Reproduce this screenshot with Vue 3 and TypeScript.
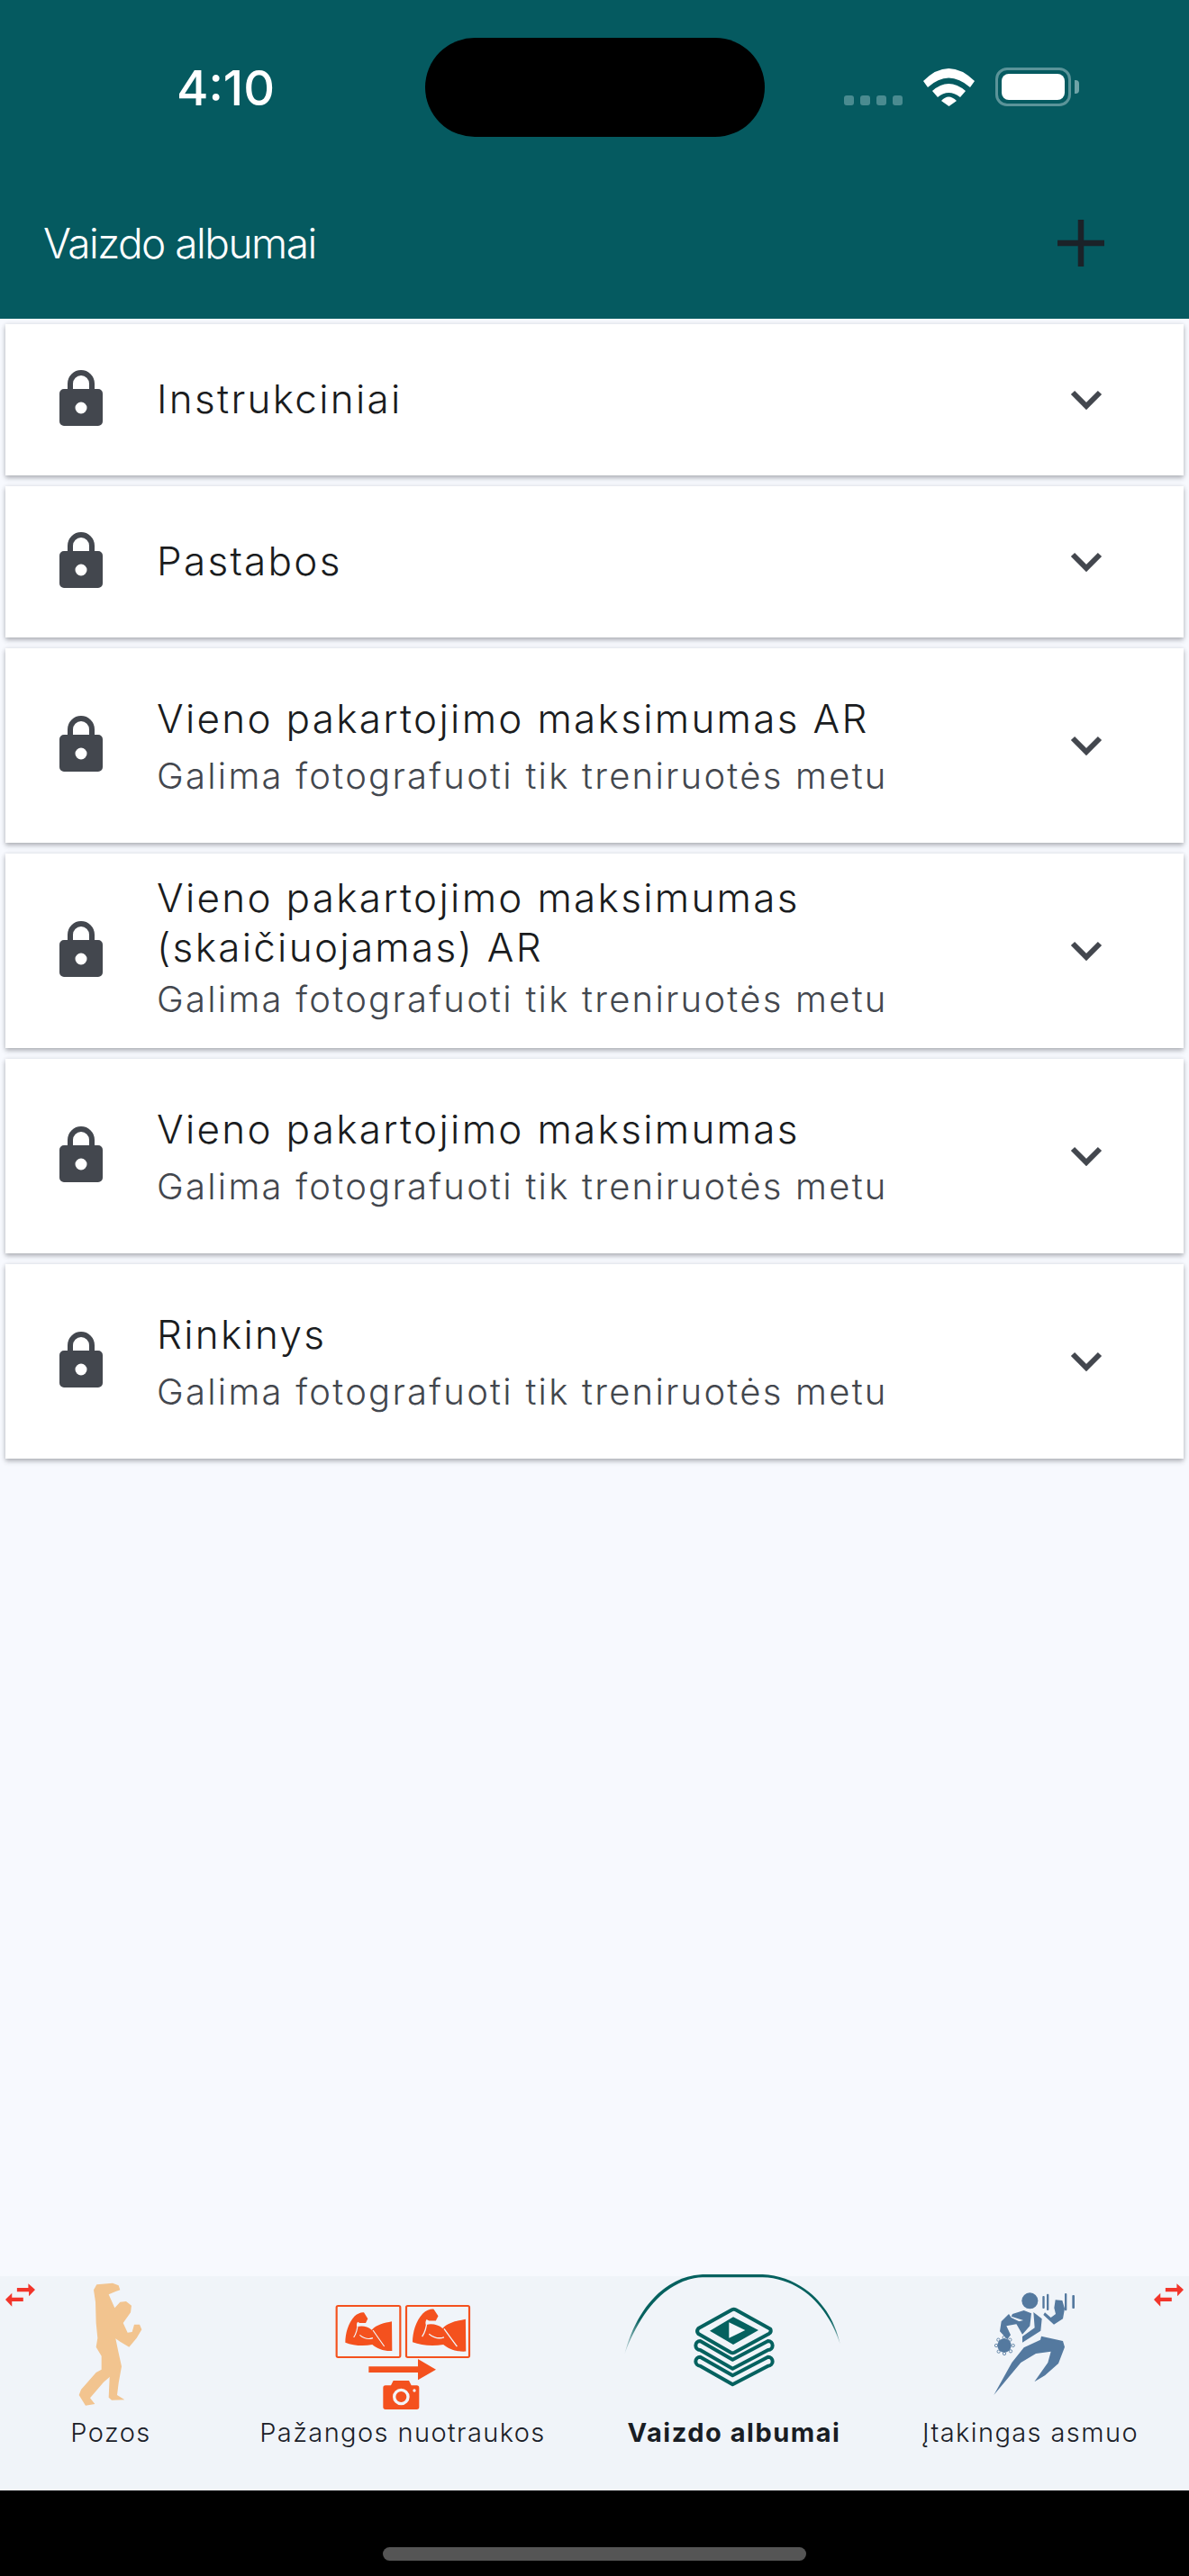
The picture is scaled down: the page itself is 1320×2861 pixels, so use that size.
<script setup lang="ts">
interface Album { title: string; sub?: string; wrap?: boolean }
const albums: Album[] = [
  { title: 'Instrukciniai' },
  { title: 'Pastabos' },
  { title: 'Vieno pakartojimo maksimumas AR', sub: 'Galima fotografuoti tik treniruotės metu' },
  { title: 'Vieno pakartojimo maksimumas (skaičiuojamas) AR', sub: 'Galima fotografuoti tik treniruotės metu', wrap: true },
  { title: 'Vieno pakartojimo maksimumas', sub: 'Galima fotografuoti tik treniruotės metu' },
  { title: 'Rinkinys', sub: 'Galima fotografuoti tik treniruotės metu' },
]
const bicep = 'M310 305 C310 275 320 240 340 218 C350 208 365 203 372 205 L385 226 L378 240 L358 240 L351 236 C347 243 347 250 350 252 C368 248 385 252 398 263 C415 245 440 240 465 235 L466 333 C440 335 415 325 400 312 C370 318 335 315 310 305 Z'
const flexLines = 'M352 240 Q350 270 338 288 M358 280 Q380 298 402 290 M402 264 Q420 290 440 318'
</script>

<template>
  <div class="screen">
    <header class="top">
      <div class="status">
        <span class="time">4:10</span>
        <span class="island"></span>
        <div class="indicators">
          <span class="dots"><i></i><i></i><i></i><i></i></span>
          <svg class="wifi" viewBox="0 0 57 42" width="57" height="42">
            <path d="M0 14 Q28 -14 57 14 L52 21 Q28 0 5 21 Z" fill="#fff" />
            <path d="M10 25 Q28 9 47 25 L41 32 Q28 22 16 32 Z" fill="#fff" />
            <path d="M20 36 Q28 27 37 36 L28.500 42 Z" fill="#fff" />
          </svg>
          <span class="battery"><span class="battery-fill"></span></span>
          <span class="nib"></span>
        </div>
      </div>
      <div class="bar">
        <h1 class="bar-title">Vaizdo albumai</h1>
        <svg class="plus" viewBox="0 0 52 52" width="52" height="52">
          <path d="M0 26 H52 M26 0 V52" stroke="#1b2228" stroke-width="6.500" fill="none" />
        </svg>
      </div>
    </header>

    <main class="list">
      <article v-for="a in albums" :key="a.title" class="card" :class="{ tall: a.sub }">
        <svg class="lock" viewBox="0 0 48 62" width="48" height="62">
          <path d="M12 24 V15 A12 12 0 0 1 36 15 V24" fill="none" stroke="#43474e" stroke-width="6" />
          <path fill-rule="evenodd" fill="#43474e" d="M5 21 H43 A5 5 0 0 1 48 26 V57 A5 5 0 0 1 43 62 H5 A5 5 0 0 1 0 57 V26 A5 5 0 0 1 5 21 Z M24 35.500 A6.500 6.500 0 1 0 24 48.500 A6.500 6.500 0 1 0 24 35.500 Z" />
        </svg>
        <div class="copy" :class="{ single: a.sub && !a.wrap, plain: !a.sub, wrapped: a.wrap }">
          <div class="title">{{ a.title }}</div>
          <div v-if="a.sub" class="sub">{{ a.sub }}</div>
        </div>
        <svg class="chev" viewBox="0 0 36 22" width="36" height="22">
          <path d="M3 3 L18 18 L33 3" fill="none" stroke="#43474e" stroke-width="6" />
        </svg>
      </article>
    </main>

    <nav class="nav">
      <svg class="swap swap-l" viewBox="18 108 100 77" width="33" height="26">
        <path d="M57 122 H95 V108 L118 128 L97 150 V135 H57 Z M78 155 V168 H40 V185 L18 162 L40 140 V155 Z" fill="#f2352b" />
      </svg>
      <svg class="swap swap-r" viewBox="18 108 100 77" width="33" height="26">
        <path d="M57 122 H95 V108 L118 128 L97 150 V135 H57 Z M78 155 V168 H40 V185 L18 162 L40 140 V155 Z" fill="#f2352b" />
      </svg>

      <div class="item">
        <svg class="icon" viewBox="0 84 738 480">
          <path fill="#f2c48f" d="M400 130 L395 115 L375 107 L322 112 L312 130 L318 170 L320 240 L325 290 L320 320 L338 350 L338 395 L320 405 L270 462 L263 480 L285 515 L316 510 L300 490 L345 437 L365 420 L362 488 L372 497 L415 496 L390 480 L395 440 L405 385 L395 340 L385 292 L400 302 L430 320 L455 290 L472 262 L465 245 L447 245 L440 270 L425 272 L410 240 L435 205 L438 182 L420 168 L400 170 L382 190 L362 145 L385 135 Z" />
        </svg>
        <span class="label">Pozos</span>
      </div>

      <div class="item">
        <svg class="icon" viewBox="-102 84 1206 480">
          <rect x="281" y="183" width="212" height="171" rx="5" fill="none" stroke="#f4511e" stroke-width="6.500" />
          <rect x="513" y="183" width="210" height="171" rx="5" fill="none" stroke="#f4511e" stroke-width="6.500" />
          <path :d="bicep" fill="#f4511e" />
          <path :d="flexLines" fill="none" stroke="#f2f5f9" stroke-width="3.500" />
          <g transform="translate(224 -11) translate(310 205) scale(1.14 1.1) translate(-310 -205)">
            <path :d="bicep" fill="#f4511e" />
            <path :d="flexLines" fill="none" stroke="#f2f5f9" stroke-width="3.500" />
          </g>
          <path d="M388 385 H552 V360 L612 395 L552 430 V405 H388 Z" fill="#f4511e" />
          <path fill-rule="evenodd" fill="#f4511e" d="M444 448 H462 L470 432 H522 L530 448 H548 A8 8 0 0 1 556 456 V520 A8 8 0 0 1 548 528 H444 A8 8 0 0 1 436 520 V456 A8 8 0 0 1 444 448 Z" />
          <circle cx="496" cy="486" r="23" fill="none" stroke="#f2f5f9" stroke-width="10" />
          <circle cx="540" cy="465" r="5" fill="#f2f5f9" />
        </svg>
        <span class="label">Pažangos nuotraukos</span>
      </div>

      <div class="item">
        <svg class="icon arc-host" viewBox="-36 84 1002 480">
          <defs>
            <linearGradient id="arcFade" x1="0" y1="0" x2="0" y2="1">
              <stop offset="0" stop-color="#05615f" />
              <stop offset="0.55" stop-color="#05615f" />
              <stop offset="1" stop-color="#05615f" stop-opacity="0.1" />
            </linearGradient>
          </defs>
          <path fill="url(#arcFade)" d="M100 345 C135 205 225 85 360 78 L560 78 C690 85 790 180 818 310 C780 190 690 92 560 88 L360 88 C240 92 150 205 100 345 Z" />
          <g fill="none" stroke="#05615f" stroke-width="12" stroke-linejoin="round" stroke-linecap="round">
            <path d="M470 196 L586 260 Q590 270 582 275 L466 338 Q460 341 454 338 L346 276 Q338 268 346 258 L458 196 Q464 193 470 196 Z" />
            <path d="M352 300 L460 362 L578 300 A15 15 0 0 1 578 330 L460 392 L352 330 A15 15 0 0 1 352 300 Z" />
            <path d="M352 353 L460 415 L578 353 A15 15 0 0 1 578 383 L460 445 L352 383 A15 15 0 0 1 352 353 Z" />
          </g>
          <path d="M462 220 L546 264 L462 312 L384 266 Z" fill="#05615f" />
          <path d="M448 238 L502 264 L448 290 Z" fill="#f3f6fa" />
        </svg>
        <span class="label strong">Vaizdo albumai</span>
      </div>

      <div class="item">
        <svg class="icon" viewBox="6 84 972 480">
          <g fill="#54799f">
            <circle cx="490" cy="166" r="27" />
            <rect x="532" y="150" width="7" height="42" rx="3" />
            <rect x="546" y="143" width="7" height="55" rx="3" />
            <rect x="606" y="141" width="7" height="58" rx="3" />
            <rect x="631" y="147" width="8" height="45" rx="3" />
            <path d="M535 213 L570 245 L600 226 L606 192 L598 165 L575 163 L571 190 L576 210 L560 222 L540 205 Z" />
            <path d="M420 210 L395 235 L390 268 L415 295 L426 280 L412 250 L465 240 L428 222 Z" />
            <path d="M432 210 L470 198 L495 208 L490 250 L465 278 L442 238 L468 231 L428 218 Z" />
            <path d="M502 204 L530 226 L526 266 L465 305 L465 285 L506 256 Z" />
            <path d="M528 284 L600 300 L606 320 L585 375 L540 415 L505 436 L550 372 L560 335 L510 342 L460 372 L370 480 L430 372 L470 322 L525 296 Z" />
            <circle cx="405" cy="315" r="23" />
          </g>
          <g fill="none" stroke="#54799f" stroke-width="2.500">
            <circle cx="378" cy="315" r="5" /><circle cx="385" cy="296" r="5" /><circle cx="404" cy="288" r="5" />
            <circle cx="424" cy="296" r="5" /><circle cx="434" cy="315" r="5" /><circle cx="426" cy="334" r="5" />
            <circle cx="405" cy="342" r="5" /><circle cx="386" cy="335" r="5" />
          </g>
        </svg>
        <span class="label">Įtakingas asmuo</span>
      </div>
    </nav>

    <footer class="home"><span class="home-bar"></span></footer>
  </div>
</template>

<style scoped>
.screen {
  width: 1320px;
  height: 2861px;
  display: flex;
  flex-direction: column;
  background: #f7f9fe;
  font-family: Inter, "Noto Sans", sans-serif;
  overflow: hidden;
}
.top { height: 354px; background: #055a60; display: flex; flex-direction: column; }
.status { height: 152px; position: relative; flex: none; }
.time {
  position: absolute; left: 196px; top: 70px;
  font-size: 54px; line-height: 56px; font-weight: 500; color: #fff; letter-spacing: 0;
}
.island { position: absolute; left: 472px; top: 42px; width: 377px; height: 110px; border-radius: 55px; background: #000; }
.indicators { position: absolute; left: 937px; top: 75px; height: 43px; display: flex; align-items: flex-end; }
.dots { display: flex; gap: 7px; margin-bottom: 1px; }
.dots i { width: 11px; height: 11px; border-radius: 3px; background: #4a8b90; }
.wifi { margin-left: 23px; }
.battery {
  margin-left: 23px; width: 84px; height: 43px; box-sizing: border-box; border: 3px solid #5b9499;
  border-radius: 13px; padding: 4px; display: flex;
}
.battery-fill { flex: 1; background: #fff; border-radius: 8px; }
.nib { width: 5px; height: 15px; margin: 0 0 14px 4px; background: #6fa3a7; border-radius: 0 4px 4px 0; }
.bar { flex: 1; display: flex; align-items: center; justify-content: space-between; padding: 34px 94px 0 48px; }
.bar-title { margin: 0; font-size: 46px; line-height: 56px; font-weight: 300; color: #fff; letter-spacing: -1.5px; }

.list { flex: 1; padding: 6px 6px 0; display: flex; flex-direction: column; gap: 12px; }
.card {
  min-height: 168px; background: #fff; display: flex; align-items: center; padding: 0 90px 0 60px;
  box-sizing: border-box; box-shadow: 0 3px 5px rgba(35, 40, 48, 0.3), 0 0 5px rgba(35, 40, 48, 0.1);
}
.card.tall { min-height: 216px; }
.lock { flex: none; margin-bottom: 4px; }
.copy { flex: 1; margin-left: 60px; min-width: 0; padding-right: 90px; }
.copy.plain { padding-bottom: 3px; }
.copy.single { padding-top: 4px; }
.copy.single .sub { margin-top: 9px; }
.copy.wrapped { padding-bottom: 4px; }
.copy.wrapped .title { line-height: 55px; }
.copy.wrapped .sub { margin-top: 2px; }
.title { font-size: 44px; line-height: 54px; font-weight: 350; color: #1a1c1e; letter-spacing: 2.3px; }
.sub { font-size: 40px; line-height: 56px; font-weight: 350; color: #43474e; letter-spacing: 2.25px; }
.chev { flex: none; }

.nav {
  height: 238px; background: #f0f4f9; display: grid; grid-template-columns: 246px 402px 334px 324px;
  grid-template-rows: 1fr; position: relative;
}
.item { display: flex; flex-direction: column; align-items: center; min-width: 0; }
.icon { display: block; width: 100%; height: 160px; overflow: visible; flex: none; }
.label { font-size: 29px; line-height: 28px; color: #1a2028; letter-spacing: 1.4px; white-space: nowrap; font-weight: 350; }
.label.strong { font-weight: 700; color: #191d24; letter-spacing: 1.5px; }
.swap { position: absolute; top: 8px; }
.swap-l { left: 6px; }
.swap-r { left: 1281px; }
.home { height: 95px; background: #000; display: flex; justify-content: center; padding-top: 63px; box-sizing: border-box; }
.home-bar { width: 470px; height: 15px; border-radius: 8px; background: #555; }
</style>
